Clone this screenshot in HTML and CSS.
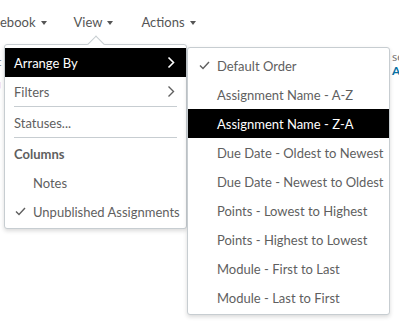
FILE: index.html
```html
<!DOCTYPE html>
<html lang="en">
<head>
    <meta charset="UTF-8">
    <meta name="viewport" content="width=device-width, initial-scale=1.0">
    <title>Gradebook View Menu</title>
    <link rel="stylesheet" href="styles.css">
</head>
<body>

<div class="page">
    <div class="toolbar">
        <span class="nav-item first">ebook <span class="caret"></span></span>
        <span class="nav-item open">View <span class="caret"></span></span>
        <span class="nav-item">Actions <span class="caret"></span></span>
    </div>

    <!-- bits of the gradebook showing behind the menus -->
    <div class="behind">
        <span class="peek peek-t">t</span>
        <span class="peek peek-j">J</span>
        <span class="peek peek-se">se</span>
        <span class="peek peek-al">Al</span>
    </div>

    <!-- View menu -->
    <div class="menu view-menu">
        <div class="menu-tip"></div>
        <div class="item active has-sub">Arrange By
            <svg class="chevron" width="8" height="13" viewBox="0 0 8 13"><path d="M1.5 1.5 L6.5 6.5 L1.5 11.5" fill="none" stroke="currentColor" stroke-width="1.6"/></svg>
        </div>
        <div class="item has-sub">Filters
            <svg class="chevron" width="8" height="13" viewBox="0 0 8 13"><path d="M1.5 1.5 L6.5 6.5 L1.5 11.5" fill="none" stroke="currentColor" stroke-width="1.4"/></svg>
        </div>
        <div class="separator"></div>
        <div class="item">Statuses...</div>
        <div class="separator"></div>
        <div class="item group-label">Columns</div>
        <div class="item indent">Notes</div>
        <div class="item indent checked">
            <svg class="check" width="11" height="9" viewBox="0 0 11 9"><path d="M1 4.5 L4 7.5 L10 1" fill="none" stroke="currentColor" stroke-width="1.4"/></svg>
            Unpublished Assignments
        </div>
    </div>

    <!-- Arrange By submenu -->
    <div class="menu sub-menu">
        <div class="item checked">
            <svg class="check" width="11" height="9" viewBox="0 0 11 9"><path d="M1 4.5 L4 7.5 L10 1" fill="none" stroke="currentColor" stroke-width="1.4"/></svg>
            Default Order
        </div>
        <div class="item">Assignment Name - A-Z</div>
        <div class="item active">Assignment Name - Z-A</div>
        <div class="item">Due Date - Oldest to Newest</div>
        <div class="item">Due Date - Newest to Oldest</div>
        <div class="item">Points - Lowest to Highest</div>
        <div class="item">Points - Highest to Lowest</div>
        <div class="item">Module - First to Last</div>
        <div class="item">Module - Last to First</div>
    </div>
</div>

</body>
</html>
```

FILE: styles.css
```css
body {
    font-family: 'Lato', 'Liberation Sans', sans-serif;
    background-color: white;
    color: #555;
    margin: 0;
    padding: 0;
}

.page {
    position: relative;
    width: 399px;
    height: 329px;
    overflow: hidden;
}

.toolbar {
    display: flex;
    align-items: center;
    height: 44px;
    font-size: 13px;
    color: #555;
}

.nav-item {
    display: flex;
    align-items: center;
    gap: 5px;
    margin-right: 28px;
    white-space: nowrap;
}

.nav-item.first {
    margin-right: 27px;
}

.caret {
    display: inline-block;
    width: 0;
    height: 0;
    border-left: 3px solid transparent;
    border-right: 3px solid transparent;
    border-top: 4px solid #555;
    margin-top: 2px;
}

/* Things showing from under the menus */
.peek {
    position: absolute;
    font-size: 12px;
    line-height: 12px;
}

.peek-t {
    left: -3px;
    top: 56px;
    color: #777;
}

.peek-j {
    left: -4px;
    top: 80px;
    color: #e66000;
}

.peek-se {
    left: 392px;
    top: 51px;
    color: #777;
}

.peek-al {
    left: 392px;
    top: 65px;
    color: #0770a3;
    font-weight: bold;
}

/* Menus */
.menu {
    position: absolute;
    background-color: white;
    border: 1px solid #c7cdd1;
    border-radius: 3px;
    box-shadow: 0 2px 4px rgba(0, 0, 0, 0.15);
    font-size: 13px;
    color: #5f5f5f;
}

.view-menu {
    left: 4px;
    top: 44px;
    width: 181px;
    padding: 3px 0 2px;
    z-index: 2;
}

.sub-menu {
    left: 187px;
    top: 47px;
    width: 201px;
    padding: 3px 0 2px;
    z-index: 3;
}

.menu-tip {
    position: absolute;
    top: -7px;
    left: 85px;
    width: 11px;
    height: 11px;
    background-color: white;
    border-top: 1px solid #c7cdd1;
    border-left: 1px solid #c7cdd1;
    transform: rotate(45deg);
}

.item {
    position: relative;
    display: flex;
    align-items: center;
    height: 29px;
    padding-left: 9px;
    white-space: nowrap;
}

.item.active {
    background-color: black;
    color: white;
}

.has-sub {
    justify-content: space-between;
    padding-right: 11px;
}

.chevron {
    display: block;
}

.separator {
    height: 1px;
    margin: 0 9px 1px;
    background-color: #c7cdd1;
}

.group-label {
    font-weight: bold;
}

.view-menu .indent {
    padding-left: 28px;
}

.sub-menu .item {
    padding-left: 29px;
}

.check {
    position: absolute;
    left: 11px;
    top: 10px;
}

.view-menu .check {
    left: 10px;
}
```
